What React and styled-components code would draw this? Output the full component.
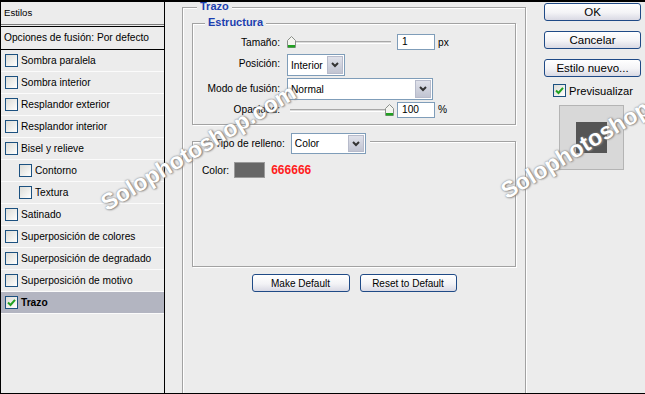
import React from 'react';
import styled, { createGlobalStyle } from 'styled-components';

const Global = createGlobalStyle`
  html, body { margin: 0; padding: 0; background: #ececec; }
  body { font-family: "Liberation Sans", Arial, sans-serif; font-size: 10.2px; color: #000; }
  * { box-sizing: border-box; }
`;

const Window = styled.div`
  position: relative;
  width: 645px;
  height: 394px;
  border-top: 2px solid #000;
  border-left: 1px solid #000;
  border-bottom: 1px solid #000;
  background: #ececec;
  display: flex;
  overflow: hidden;
`;

/* ---------- left list ---------- */
const LeftPanel = styled.div`
  width: 164px;
  border-right: 1px solid #000;
  display: flex;
  flex-direction: column;
`;

const Header = styled.div`
  height: 23px;
  padding-left: 3px;
  line-height: 22px;
  font-size: 9.6px;
  border-bottom: 1px solid #7a7a7a;
`;

const OptionsRow = styled.div`
  margin-top: 1px;
  height: 24px;
  padding-left: 3px;
  line-height: 22px;
  border-top: 1px solid #000;
  border-bottom: 1px solid #000;
`;

const Item = styled.div`
  height: 22px;
  display: flex;
  align-items: center;
  gap: 3px;
  padding-left: ${p => (p.$indent ? 18 : 4)}px;
  border-bottom: 1px solid #fbfbfb;
  background: ${p => (p.$selected ? '#b3b5c1' : 'transparent')};
  font-weight: ${p => (p.$selected ? 'bold' : 'normal')};
`;

const Box = styled.span`
  width: 13px;
  height: 13px;
  flex: none;
  border: 1px solid #1c5180;
  background: linear-gradient(135deg, #dcdcd7 0%, #f4f4f2 70%, #fff 100%);
  display: flex;
  align-items: center;
  justify-content: center;
`;

const Check = ({ checked }) => (
  <Box>
    {checked && (
      <svg width="9" height="9" viewBox="0 0 9 9">
        <path d="M1 4.5 L3.5 7 L8 1.8" fill="none" stroke="#21a121" strokeWidth="2" />
      </svg>
    )}
  </Box>
);

/* ---------- main ---------- */
const Main = styled.div`
  width: 365px;
  padding: 5px 4px 0 17px;
  display: flex;
  flex-direction: column;
`;

const Group = styled.div`
  position: relative;
  border: 1px solid #a2a2a2;
  border-bottom: ${p => (p.$open ? 'none' : '1px solid #a2a2a2')};
  box-shadow: inset 1px 1px 0 #fff, 1px 1px 0 #fff;
  padding: ${p => p.$pad};
  height: ${p => p.$h};
  flex: ${p => (p.$open ? 1 : 'none')};
  margin-top: ${p => p.$mt || 0}px;
  display: flex;
  flex-direction: column;
`;

const Legend = styled.div`
  position: absolute;
  top: ${p => p.$top}px;
  left: ${p => p.$left}px;
  padding: 0 ${p => p.$pr || 3}px 0 3px;
  background: #ececec;
  color: #1c3fb0;
  font-weight: bold;
  font-size: 11px;
  line-height: 11px;
  display: flex;
  align-items: center;
  gap: 6px;
`;

const FormRow = styled.div`
  display: flex;
  align-items: center;
  height: ${p => p.$h}px;
  margin-top: ${p => p.$mt || 0}px;
`;

const Label = styled.span`
  width: 88px;
  text-align: right;
  padding-right: 1px;
  margin-right: 6px;
  position: relative;
  top: ${p => p.$dy || 0}px;
`;

const SliderWrap = styled.div`
  position: relative;
  width: 107px;
  height: 14px;
  margin-right: 3px;
`;

const Track = styled.div`
  position: absolute;
  left: 3px;
  right: 3px;
  top: 6px;
  height: 3px;
  border-top: 1px solid #a8a8a8;
  border-bottom: 1px solid #fff;
  background: #dcdcdc;
`;

const Thumb = styled.svg`
  position: absolute;
  top: 1px;
  left: ${p => p.$pos}px;
`;

const Slider = ({ pos }) => (
  <SliderWrap>
    <Track />
    <Thumb $pos={pos} width="9" height="12" viewBox="0 0 9 12">
      <path d="M0.5 4.5 L4.5 0.5 L8.5 4.5 L8.5 11.5 L0.5 11.5 Z" fill="#f4f4f0" stroke="#8a8f8a" />
      <rect x="1" y="9" width="7" height="2.5" fill="#21a121" />
    </Thumb>
  </SliderWrap>
);

const Input = styled.div`
  width: 38px;
  height: 16px;
  border: 1px solid #7f9db9;
  background: #fff;
  padding-left: 4px;
  line-height: 14px;
`;

const Unit = styled.span`
  margin-left: 3px;
`;

const Select = styled.div`
  width: ${p => p.$w}px;
  height: ${p => p.$h || 22}px;
  border: 1px solid #7f9db9;
  background: #fff;
  display: flex;
  align-items: stretch;
  font-weight: normal;
  font-size: 10.2px;
  color: #000;
`;

const SelectText = styled.span`
  flex: 1;
  padding-left: 3px;
  display: flex;
  align-items: center;
`;

const Arrow = styled.span`
  width: 16px;
  margin: 1px;
  border: 1px solid #b7bbcb;
  background: linear-gradient(#dfe1ea, #c1c4d2);
  display: flex;
  align-items: center;
  justify-content: center;
`;

const DropSelect = ({ w, h, children }) => (
  <Select $w={w} $h={h}>
    <SelectText>{children}</SelectText>
    <Arrow>
      <svg width="8" height="6" viewBox="0 0 8 6">
        <path d="M1 1 L4 4 L7 1" fill="none" stroke="#333" strokeWidth="2" />
      </svg>
    </Arrow>
  </Select>
);

const LegendLabel = styled.span`
  color: #000;
  font-weight: normal;
  font-size: 10.2px;
`;

const ColorRow = styled.div`
  display: flex;
  align-items: center;
`;

const Swatch = styled.span`
  width: 31px;
  height: 16px;
  margin-left: 5px;
  border: 1px solid #9a9a9a;
  background: #666666;
`;

const HexText = styled.span`
  margin-left: 6px;
  color: #ff1c1c;
  font-weight: bold;
  font-size: 12px;
`;

const ButtonRow = styled.div`
  display: flex;
  justify-content: center;
  gap: 10px;
  margin-top: 7px;
`;

const Button = styled.div`
  width: ${p => p.$w}px;
  height: 18px;
  border: 1px solid #1f4a86;
  border-radius: 3px;
  background: linear-gradient(#ffffff 0%, #f3f3f6 55%, #d9d9e4 100%);
  display: flex;
  align-items: center;
  justify-content: center;
  font-size: ${p => p.$fs || 10}px;
`;

/* ---------- right column ---------- */
const Side = styled.div`
  flex: 1;
  padding: 1px 0 0 14px;
  display: flex;
  flex-direction: column;
  gap: 10px;
`;

const PreviewCheck = styled.div`
  display: flex;
  align-items: center;
  gap: 3px;
  margin-left: 9px;
  margin-top: -3px;
  font-size: 11.2px;
`;

const Preview = styled.div`
  width: 65px;
  height: 65px;
  margin-left: 15px;
  margin-top: -2px;
  border: 1px solid #b4b4b4;
  background: #d8d8d8;
  display: flex;
  align-items: center;
  justify-content: center;
`;

const PreviewSquare = styled.div`
  width: 31px;
  height: 31px;
  background: #555555;
`;

/* ---------- watermark ---------- */
const Watermark = styled.div`
  position: absolute;
  left: ${p => p.$x}px;
  top: ${p => p.$y}px;
  transform-origin: 0 100%;
  transform: rotate(-31deg);
  font-family: "Liberation Sans", Arial, sans-serif;
  font-weight: bold;
  font-size: 23px;
  line-height: 23px;
  color: #fff;
  white-space: nowrap;
  text-shadow: 0 0 2px #777, 1px 1px 2px #888;
  pointer-events: none;
`;

const items = [
  { t: 'Sombra paralela' },
  { t: 'Sombra interior' },
  { t: 'Resplandor exterior' },
  { t: 'Resplandor interior' },
  { t: 'Bisel y relieve' },
  { t: 'Contorno', indent: true },
  { t: 'Textura', indent: true },
  { t: 'Satinado' },
  { t: 'Superposición de colores' },
  { t: 'Superposición de degradado' },
  { t: 'Superposición de motivo' },
  { t: 'Trazo', selected: true, checked: true },
];

export default function App() {
  return (
    <>
      <Global />
      <Window>
        <LeftPanel>
          <Header>Estilos</Header>
          <OptionsRow>Opciones de fusión: Por defecto</OptionsRow>
          {items.map(it => (
            <Item key={it.t} $indent={it.indent} $selected={it.selected}>
              <Check checked={it.checked} />
              {it.t}
            </Item>
          ))}
        </LeftPanel>

        <Main>
          <Group $open $pad="15px 9px 0 9px">
            <Legend $top={-7} $left={14}>Trazo</Legend>
            <Group $h="102px" $pad="10px 0 0 0">
              <Legend $top={-7} $left={12}>Estructura</Legend>
              <FormRow $h={16}>
                <Label>Tamaño:</Label>
                <Slider pos={0} />
                <Input>1</Input>
                <Unit>px</Unit>
              </FormRow>
              <FormRow $h={22} $mt={4}>
                <Label $dy={-2}>Posición:</Label>
                <DropSelect w={58}>Interior</DropSelect>
              </FormRow>
              <FormRow $h={22} $mt={2}>
                <Label $dy={-1}>Modo de fusión:</Label>
                <DropSelect w={146}>Normal</DropSelect>
              </FormRow>
              <FormRow $h={17} $mt={1}>
                <Label>Opacidad:</Label>
                <Slider pos={98} />
                <Input>100</Input>
                <Unit>%</Unit>
              </FormRow>
            </Group>

            <Group $h="126px" $mt={16} $pad="20px 0 0 9px">
              <Legend $top={-9} $left={19} $pr={4}>
                <LegendLabel>Tipo de relleno:</LegendLabel>
                <DropSelect w={75} h={21}>Color</DropSelect>
              </Legend>
              <ColorRow>
                Color:
                <Swatch />
                <HexText>666666</HexText>
              </ColorRow>
            </Group>

            <ButtonRow>
              <Button $w={98}>Make Default</Button>
              <Button $w={97}>Reset to Default</Button>
            </ButtonRow>
          </Group>
        </Main>

        <Side>
          <Button $w={97} $fs={11.5}>OK</Button>
          <Button $w={97} $fs={11.5}>Cancelar</Button>
          <Button $w={97} $fs={11.5}>Estilo nuevo...</Button>
          <PreviewCheck>
            <Check checked />
            Previsualizar
          </PreviewCheck>
          <Preview>
            <PreviewSquare />
          </Preview>
        </Side>

        <Watermark $x={108} $y={190}>Solophotoshop.com</Watermark>
        <Watermark $x={508} $y={178}>Solophotoshop</Watermark>
      </Window>
    </>
  );
}
